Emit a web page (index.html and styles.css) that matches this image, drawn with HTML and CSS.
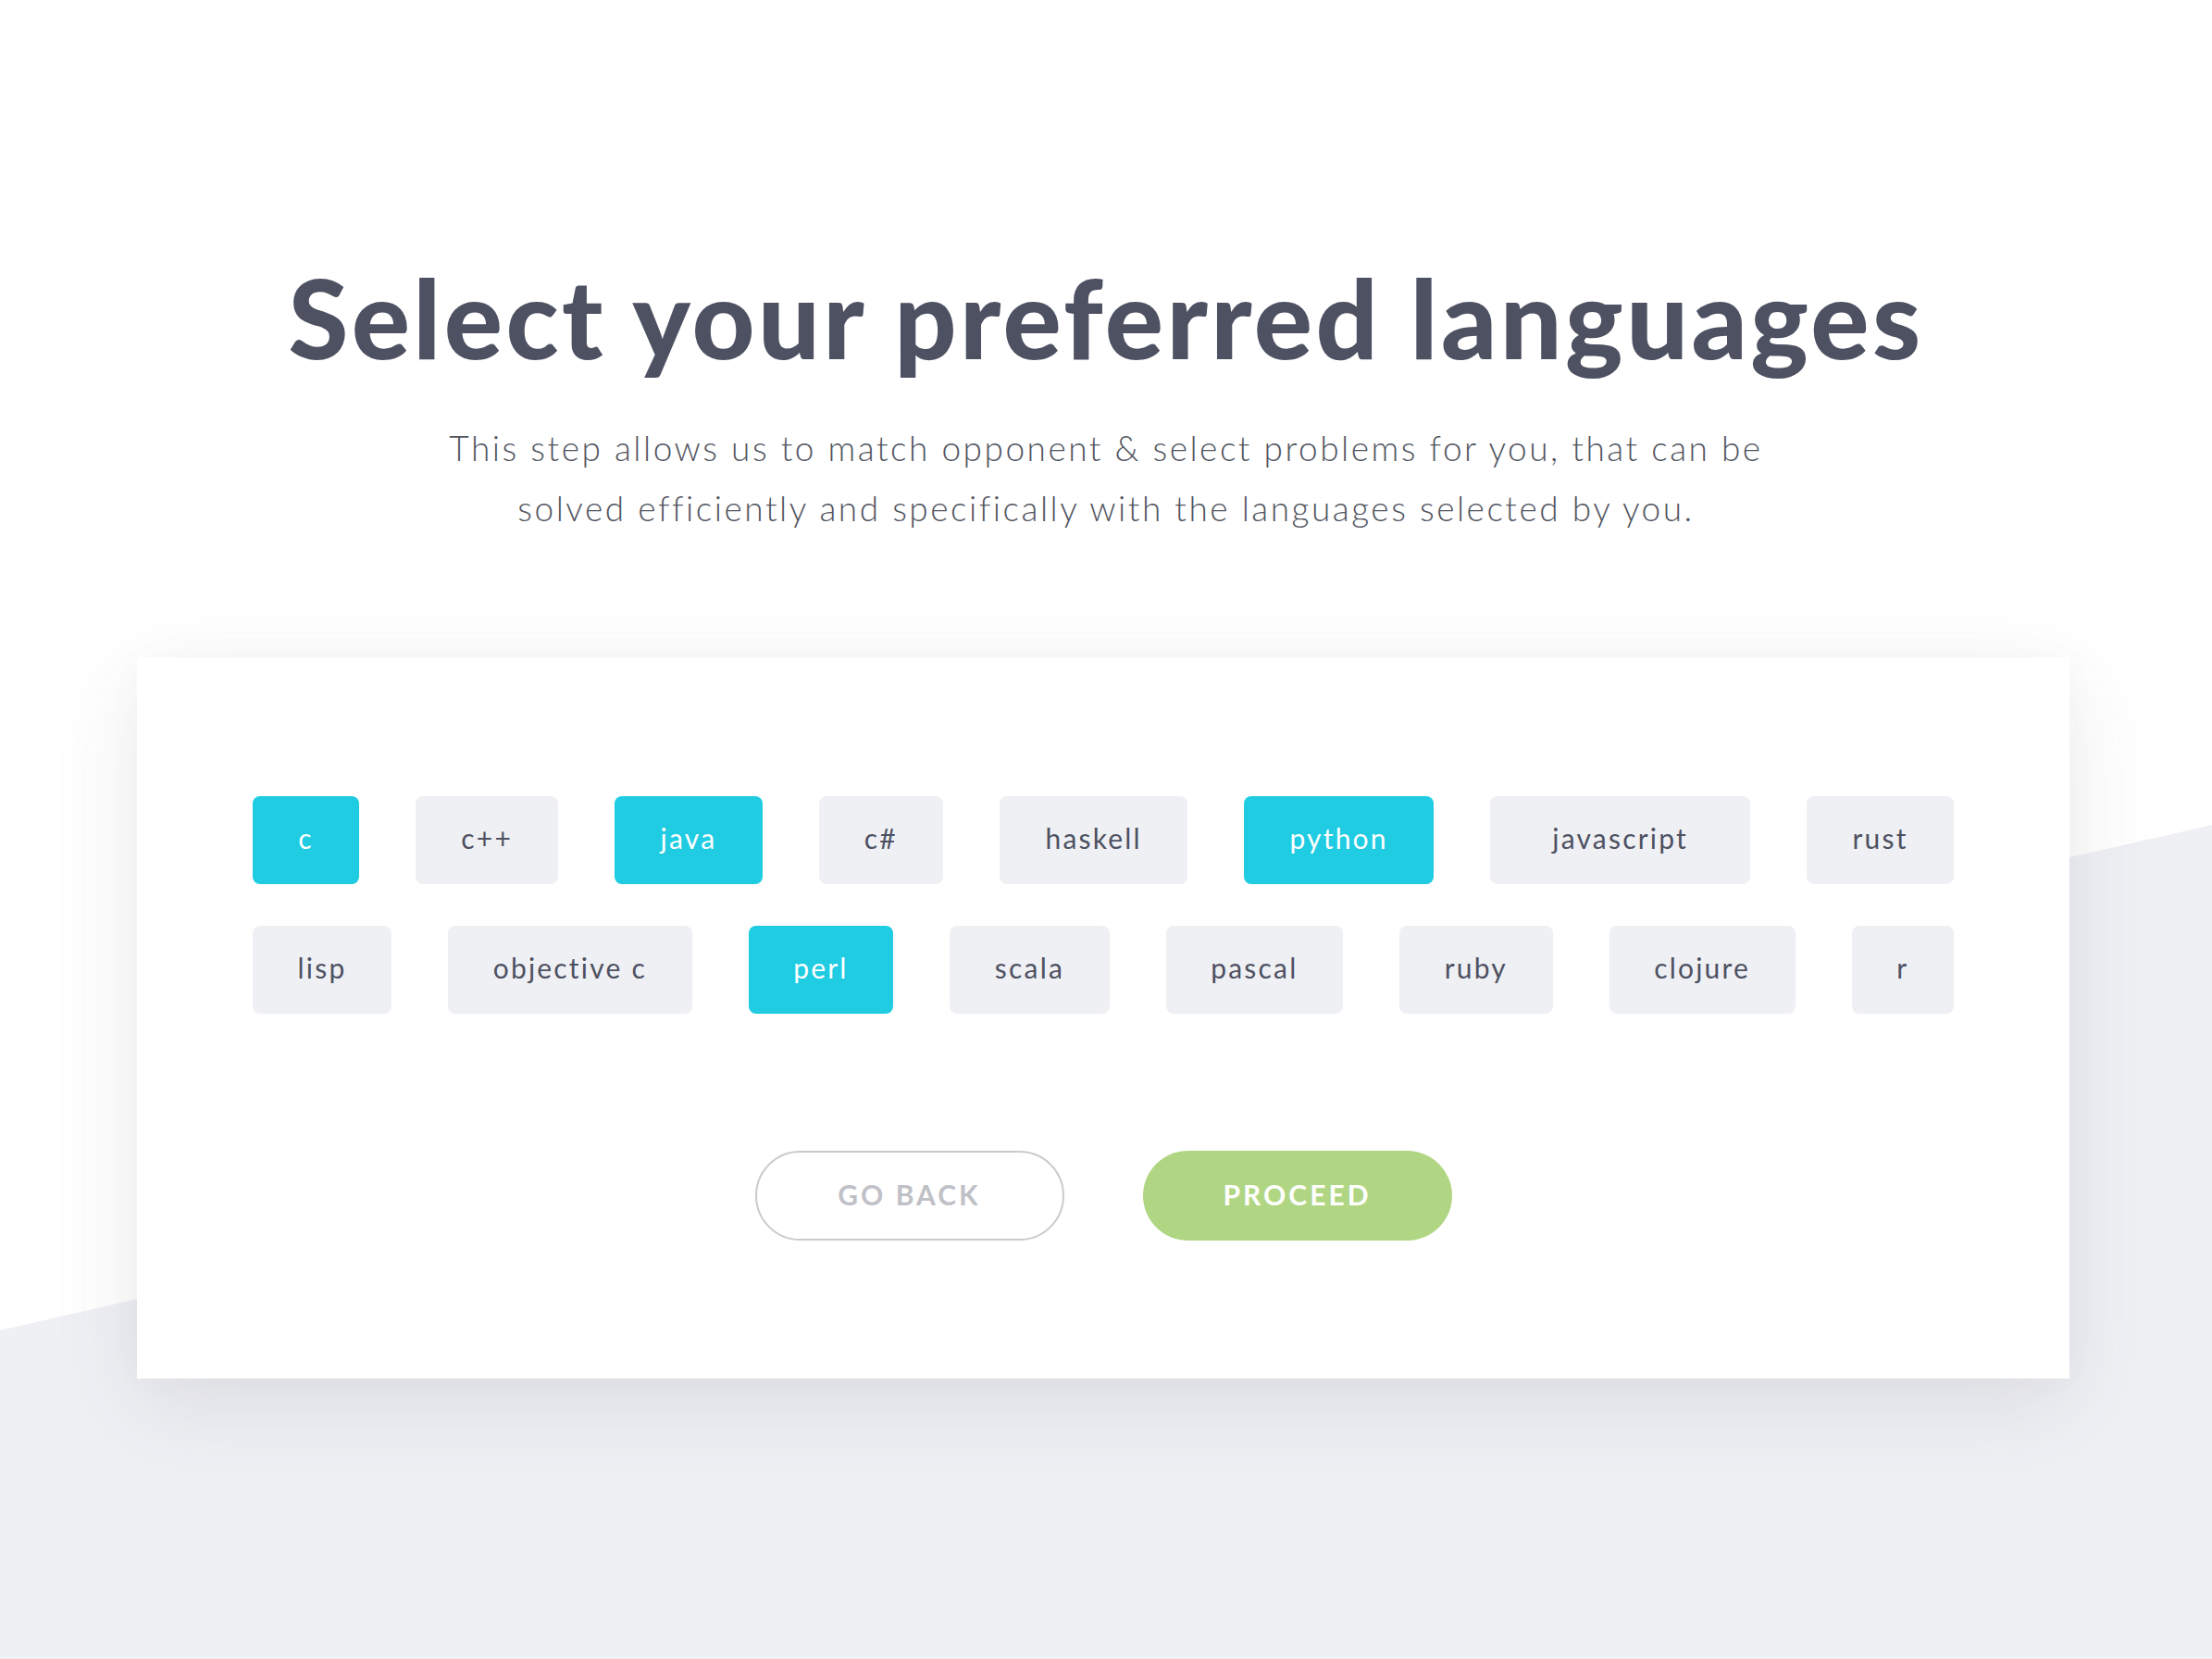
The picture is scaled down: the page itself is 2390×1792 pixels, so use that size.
FILE: index.html
```html
<!DOCTYPE html>
<html lang="en">
<head>
<meta charset="utf-8">
<title>Select your preferred languages</title>
<link rel="stylesheet" href="styles.css">
</head>
<body>
<div class="backdrop"></div>
<main class="page">
  <h1 class="title">Select your preferred languages</h1>
  <p class="subtitle">This step allows us to match opponent &amp; select problems for you, that can be<br>solved efficiently and specifically with the languages selected by you.</p>
  <section class="card">
    <div class="chips">
      <div class="chip-row">
        <button class="chip is-selected">c</button>
        <button class="chip">c++</button>
        <button class="chip is-selected">java</button>
        <button class="chip">c#</button>
        <button class="chip">haskell</button>
        <button class="chip is-selected">python</button>
        <button class="chip chip-wide">javascript</button>
        <button class="chip">rust</button>
      </div>
      <div class="chip-row">
        <button class="chip">lisp</button>
        <button class="chip">objective c</button>
        <button class="chip is-selected">perl</button>
        <button class="chip">scala</button>
        <button class="chip">pascal</button>
        <button class="chip">ruby</button>
        <button class="chip">clojure</button>
        <button class="chip">r</button>
      </div>
    </div>
    <div class="actions">
      <button class="btn btn-outline">GO BACK</button>
      <button class="btn btn-primary">PROCEED</button>
    </div>
  </section>
</main>
</body>
</html>
```

FILE: styles.css
```css
* { box-sizing: border-box; }

html, body {
  margin: 0;
  padding: 0;
}

body {
  position: relative;
  min-height: 1792px;
  background: #ffffff;
  font-family: Lato, "Noto Sans", sans-serif;
  overflow: hidden;
}

.backdrop {
  position: absolute;
  inset: 0;
  background: #eff0f4;
  clip-path: polygon(0 1437px, 100% 891px, 100% 100%, 0 100%);
  z-index: 0;
}

.page {
  position: relative;
  z-index: 1;
  display: flex;
  flex-direction: column;
  padding-top: 284px;
}

.title {
  margin: 0;
  text-align: center;
  font-family: Lato, sans-serif;
  font-weight: 900;
  font-size: 118px;
  line-height: 1;
  color: #4e5162;
  letter-spacing: 3.4px;
}

.subtitle {
  margin: 49px 0 0;
  text-align: center;
  font-family: Lato, sans-serif;
  font-weight: 300;
  font-size: 37px;
  line-height: 65px;
  color: #52555f;
  letter-spacing: 2.5px;
}

.card {
  margin: 129px 0 0 148px;
  width: 2088px;
  height: 779px;
  background: #ffffff;
  padding: 150px 125px 0;
  box-shadow: 0 30px 90px rgba(70, 72, 95, 0.11), 0 0 40px rgba(0, 0, 0, 0.025);
  display: flex;
  flex-direction: column;
}

.chips {
  display: flex;
  flex-direction: column;
  gap: 45px;
}

.chip-row {
  display: flex;
  gap: 61px;
}

.chip {
  flex: 1 1 auto;
  height: 95px;
  padding: 0 38px 6px;
  border: none;
  border-radius: 8px;
  background: #eff0f4;
  color: #4e5162;
  font-family: Lato, sans-serif;
  font-weight: 400;
  font-size: 30px;
  letter-spacing: 2.2px;
  display: flex;
  align-items: center;
  justify-content: center;
}

.chip-wide { padding: 0 56px 6px; }

.chip.is-selected {
  background: #1fcce2;
  color: #ffffff;
}

.actions {
  margin-top: 148px;
  display: flex;
  justify-content: center;
  gap: 85px;
}

.btn {
  width: 334px;
  height: 97px;
  border-radius: 49px;
  font-family: Lato, sans-serif;
  font-weight: 700;
  font-size: 30px;
  letter-spacing: 3px;
  display: flex;
  align-items: center;
  justify-content: center;
  padding: 0 0 3px;
}

.btn-outline {
  background: #ffffff;
  border: 2px solid #c9cacf;
  color: #bfc1c7;
}

.btn-primary {
  background: #b0d684;
  border: none;
  color: #ffffff;
}
```
